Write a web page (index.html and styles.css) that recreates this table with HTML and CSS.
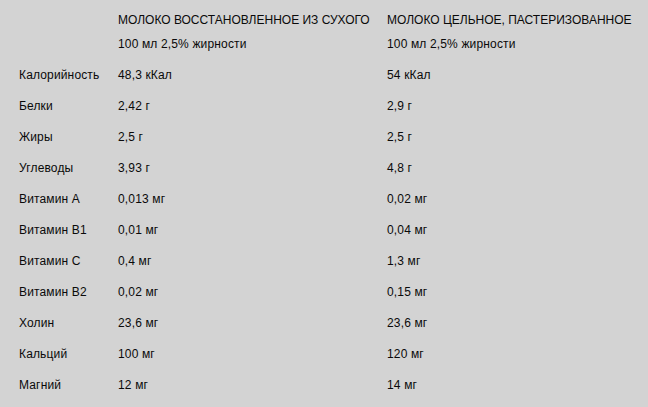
FILE: index.html
```html
<!DOCTYPE html>
<html lang="ru">
<head>
<meta charset="utf-8">
<link rel="stylesheet" href="styles.css">
</head>
<body>
<div class="table">
  <div class="row head"><span></span><span>МОЛОКО ВОССТАНОВЛЕННОЕ ИЗ СУХОГО</span><span>МОЛОКО ЦЕЛЬНОЕ, ПАСТЕРИЗОВАННОЕ</span></div>
  <div class="row sub"><span></span><span>100 мл 2,5% жирности</span><span>100 мл 2,5% жирности</span></div>
  <div class="row"><span>Калорийность</span><span>48,3 кКал</span><span>54 кКал</span></div>
  <div class="row"><span>Белки</span><span>2,42 г</span><span>2,9 г</span></div>
  <div class="row"><span>Жиры</span><span>2,5 г</span><span>2,5 г</span></div>
  <div class="row"><span>Углеводы</span><span>3,93 г</span><span>4,8 г</span></div>
  <div class="row"><span>Витамин А</span><span>0,013 мг</span><span>0,02 мг</span></div>
  <div class="row"><span>Витамин В1</span><span>0,01 мг</span><span>0,04 мг</span></div>
  <div class="row"><span>Витамин С</span><span>0,4 мг</span><span>1,3 мг</span></div>
  <div class="row"><span>Витамин В2</span><span>0,02 мг</span><span>0,15 мг</span></div>
  <div class="row"><span>Холин</span><span>23,6 мг</span><span>23,6 мг</span></div>
  <div class="row"><span>Кальций</span><span>100 мг</span><span>120 мг</span></div>
  <div class="row"><span>Магний</span><span>12 мг</span><span>14 мг</span></div>
</div>
</body>
</html>
```

FILE: styles.css
```css
html, body {
  margin: 0;
  padding: 0;
  background: #d3d3d3;
  height: 100%;
}
body {
  font-family: "Liberation Sans", Arial, sans-serif;
  font-size: 12px;
  line-height: 14px;
  color: #0a0a0a;
}
.table {
  display: flex;
  flex-direction: column;
  padding: 13px 0 0 19px;
}
.row {
  display: grid;
  grid-template-columns: 99px 269px auto;
  height: 31px;
  white-space: nowrap;
  letter-spacing: 0.15px;
}
.row.head {
  height: 24px;
  letter-spacing: 0;
}
```
